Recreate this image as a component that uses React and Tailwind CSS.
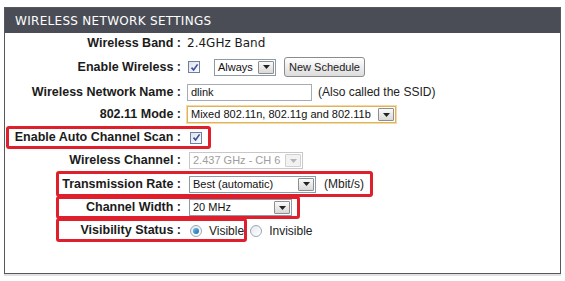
import React from 'react';

const labelFont = { fontFamily: '"Liberation Sans", Arial, sans-serif' };

function Arrow({ disabled }) {
  return (
    <span
      className={`flex items-center justify-center w-[16px] h-[13px] mr-[1px] border rounded-[1px] ${
        disabled ? 'border-[#d0d0d0] bg-[#f2f2f2]' : 'border-[#8e8e8e] bg-gradient-to-b from-[#fafafa] to-[#d9d9d9]'
      }`}
    >
      <svg width="7" height="4" viewBox="0 0 7 4">
        <path d="M0 0h7L3.5 4z" fill={disabled ? '#b5b5b5' : '#222'} />
      </svg>
    </span>
  );
}

function Select({ text, width, disabled, highlight }) {
  return (
    <div
      className={`flex items-center h-[17px] bg-white border ${
        highlight ? 'border-[#e0b35a] outline outline-1 outline-[#f3dba8]' : disabled ? 'border-[#c8c8c8]' : 'border-[#8d9aa8]'
      } ${width}`}
    >
      <span
        className={`flex-1 pl-[3px] text-[11px] leading-none whitespace-nowrap overflow-hidden ${
          disabled ? 'text-[#9d9d9d]' : 'text-[#111]'
        }`}
        style={labelFont}
      >
        {text}
      </span>
      <Arrow disabled={disabled} />
    </div>
  );
}

function Checkbox() {
  return (
    <span className="flex items-center justify-center w-[12px] h-[12px] border border-[#6d7f9e] bg-gradient-to-br from-[#dfe3ea] to-[#fbfbfc]">
      <svg width="9" height="9" viewBox="0 0 9 9">
        <path d="M1.5 4.6 L3.6 7 L7.6 1.4" stroke="#3a4f9a" strokeWidth="1.6" fill="none" />
      </svg>
    </span>
  );
}

function Radio({ checked }) {
  return (
    <span className="flex items-center justify-center w-[12px] h-[12px] rounded-full border border-[#9aa8b8] bg-gradient-to-br from-[#e4e8ee] to-white">
      {checked && <span className="w-[6px] h-[6px] rounded-full bg-gradient-to-br from-[#6cc0ef] to-[#1a6aa8]" />}
    </span>
  );
}

function Row({ label, h, children }) {
  return (
    <div className={`flex items-center ${h}`}>
      <div
        className="w-[176px] text-right pr-[0px] text-[12.5px] font-bold text-[#1b1b1b] whitespace-nowrap"
        style={labelFont}
      >
        {label} :
      </div>
      <div className="flex items-center pl-[6px] gap-[6px]">{children}</div>
    </div>
  );
}

export default function App() {
  return (
    <div className="relative w-[565px] h-[281px] bg-white overflow-hidden">
      <div className="ml-[4px] mt-[7px] w-[557px] h-[267px] border border-[#56585e] shadow-[0_2px_0_#e2e2e2]">
        <div
          className="h-[25px] bg-[#4a4d56] text-white text-[12px] tracking-[0.3px] pl-[10px] flex items-center"
          style={{ fontFamily: '"DejaVu Sans", Verdana, sans-serif' }}
        >
          WIRELESS NETWORK SETTINGS
        </div>
        <div className="flex flex-col">
          <Row label="Wireless Band" h="h-[20px]">
            <span className="text-[12px] text-[#1b1b1b] pl-[0px]" style={{ fontFamily: '"DejaVu Sans", Verdana, sans-serif' }}>
              2.4GHz Band
            </span>
          </Row>
          <Row label="Enable Wireless" h="h-[28px]">
            <span className="ml-[1px]">
              <Checkbox />
            </span>
            <span className="ml-[8px]">
              <Select text="Always" width="w-[62px]" />
            </span>
            <button
              className="ml-[2px] h-[20px] w-[81px] rounded-[3px] border border-[#8b8b8b] bg-gradient-to-b from-white to-[#dcdcdc] text-[11px] text-[#222]"
              style={labelFont}
            >
              New Schedule
            </button>
          </Row>
          <Row label="Wireless Network Name" h="h-[22px]">
            <div
              className="h-[17px] w-[125px] border border-[#a5acb5] bg-white text-[11px] leading-[15px] pl-[3px] text-[#111]"
              style={labelFont}
            >
              dlink
            </div>
            <span className="ml-[0px] text-[12px] text-[#222]" style={labelFont}>
              (Also called the SSID)
            </span>
          </Row>
          <Row label="802.11 Mode" h="h-[23px]">
            <Select text="Mixed 802.11n, 802.11g and 802.11b" width="w-[209px]" highlight />
          </Row>
          <Row label="Enable Auto Channel Scan" h="h-[23px]">
            <span className="ml-[3px]">
              <Checkbox />
            </span>
          </Row>
          <Row label="Wireless Channel" h="h-[23px]">
            <span className="ml-[2px]">
              <Select text="2.437 GHz - CH 6" width="w-[114px]" disabled />
            </span>
          </Row>
          <Row label="Transmission Rate" h="h-[24px]">
            <span className="ml-[2px]">
              <Select text="Best (automatic)" width="w-[127px]" />
            </span>
            <span className="ml-[2px] text-[12px] text-[#222]" style={labelFont}>
              (Mbit/s)
            </span>
          </Row>
          <Row label="Channel Width" h="h-[23px]">
            <span className="ml-[2px]">
              <Select text="20 MHz" width="w-[103px]" />
            </span>
          </Row>
          <Row label="Visibility Status" h="h-[23px]">
            <span className="ml-[3px]">
              <Radio checked />
            </span>
            <span className="ml-[1px] text-[12px] text-[#222]" style={labelFont}>
              Visible
            </span>
            <Radio />
            <span className="ml-[1px] text-[12px] text-[#222]" style={labelFont}>
              Invisible
            </span>
          </Row>
        </div>
      </div>

      <div className="absolute left-[6px] top-[126px] w-[205px] h-[23px] border-[3px] border-[#e01f2d] rounded-[3px]" />
      <div className="absolute left-[56px] top-[171px] w-[317px] h-[26px] border-[3px] border-[#e01f2d] rounded-[3px]" />
      <div className="absolute left-[56px] top-[196px] w-[244px] h-[23px] border-[3px] border-[#e01f2d] rounded-[3px]" />
      <div className="absolute left-[56px] top-[218px] w-[191px] h-[24px] border-[3px] border-[#e01f2d] rounded-[3px]" />
    </div>
  );
}
